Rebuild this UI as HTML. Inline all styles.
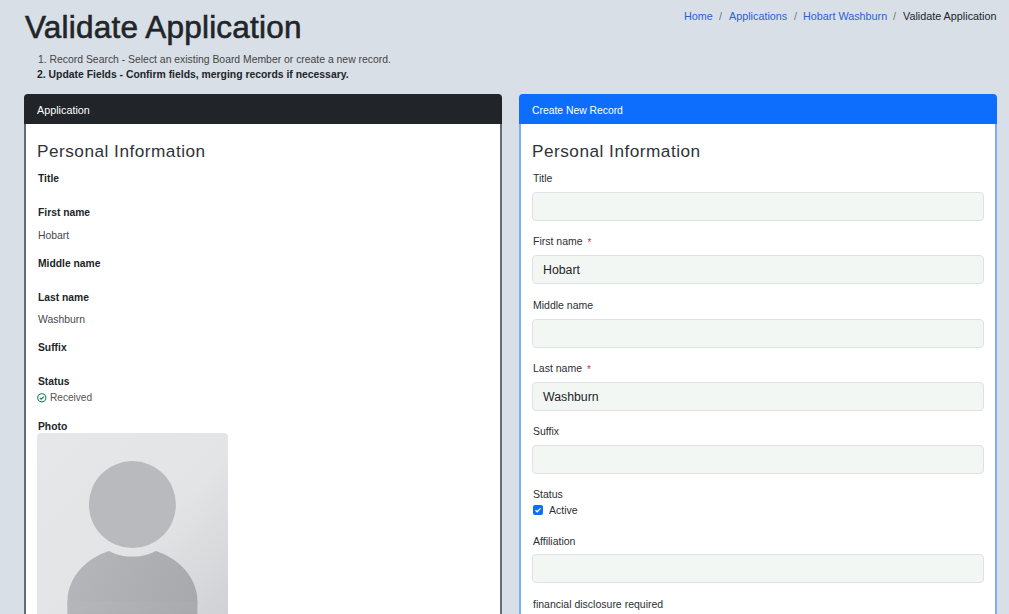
<!DOCTYPE html>
<html><head><meta charset="utf-8">
<style>
html,body{margin:0;padding:0}
body{width:1009px;height:614px;overflow:hidden;background:#d9dfe7;font-family:"Liberation Sans",sans-serif;color:#212529;position:relative}
.t{position:absolute;white-space:nowrap;line-height:1}
.b{font-weight:bold}
.card{position:absolute;top:94px;height:560px;background:#fff;border-radius:5px;box-sizing:border-box}
.hdr{position:absolute;left:0;top:0;right:0;height:30px;border-radius:4px 4px 0 0}
.inp{position:absolute;left:532px;width:452px;height:29px;box-sizing:border-box;background:#f3f7f4;border:1px solid #dee2e6;border-radius:4px}
.lab{font-size:10.5px;color:#2b2f33}
.lbl{font-size:10.3px;font-weight:bold}
</style></head><body>
<div class="t" style="left:25px;top:12px;font-size:31.5px;letter-spacing:0.2px;-webkit-text-stroke:0.6px #212529">Validate Application</div>

<div class="t" style="left:684px;top:11px;font-size:10.8px;color:#2a62d4">Home</div>
<div class="t" style="left:719px;top:11px;font-size:10.8px;color:#6c757d">/</div>
<div class="t" style="left:729px;top:11px;font-size:10.8px;color:#2a62d4">Applications</div>
<div class="t" style="left:794px;top:11px;font-size:10.8px;color:#6c757d">/</div>
<div class="t" style="left:803px;top:11px;font-size:10.8px;color:#2a62d4">Hobart Washburn</div>
<div class="t" style="left:893px;top:11px;font-size:10.8px;color:#6c757d">/</div>
<div class="t" style="left:903px;top:11px;font-size:10.8px;color:#212529">Validate Application</div>

<div class="t" style="left:38px;top:55px;font-size:10.4px;color:#444">1. Record Search - Select an existing Board Member or create a new record.</div>
<div class="t b" style="left:37px;top:70px;font-size:10.4px">2. Update Fields - Confirm fields, merging records if necessary.</div>

<div class="card" style="left:24px;width:478px;border:2px solid #676b72">
  <div class="hdr" style="background:#212529;left:-2px;right:-2px;top:-2px"></div>
</div>
<div class="card" style="left:519px;width:478px;border:2px solid #7aaefc">
  <div class="hdr" style="background:#0d6efd;left:-2px;right:-2px;top:-2px"></div>
</div>

<div class="t" style="left:37px;top:105px;font-size:10.8px;color:#fff">Application</div>
<div class="t" style="left:532px;top:106px;font-size:10.35px;color:#fff">Create New Record</div>

<div class="t" style="left:37px;top:143px;font-size:17.2px;letter-spacing:0.5px;color:#2f3337">Personal Information</div>
<div class="t" style="left:532px;top:143px;font-size:17.2px;letter-spacing:0.5px;color:#2f3337">Personal Information</div>

<!-- left card details -->
<div class="t lbl" style="left:38px;top:174px">Title</div>
<div class="t lbl" style="left:38px;top:208px">First name</div>
<div class="t" style="left:38px;top:231px;font-size:10.4px;color:#474a4d">Hobart</div>
<div class="t lbl" style="left:38px;top:259px">Middle name</div>
<div class="t lbl" style="left:38px;top:293px">Last name</div>
<div class="t" style="left:38px;top:315px;font-size:10.4px;color:#474a4d">Washburn</div>
<div class="t lbl" style="left:38px;top:343px">Suffix</div>
<div class="t lbl" style="left:38px;top:377px">Status</div>
<svg style="position:absolute;left:37px;top:393px" width="10" height="10" viewBox="0 0 10 10"><circle cx="4.8" cy="4.8" r="4.1" fill="none" stroke="#198754" stroke-width="1.1"/><path d="M2.9 4.9 L4.3 6.2 L6.8 3.6" fill="none" stroke="#198754" stroke-width="1.3"/></svg>
<div class="t" style="left:50px;top:393px;font-size:10.1px;color:#555">Received</div>
<div class="t lbl" style="left:38px;top:422px">Photo</div>

<svg style="position:absolute;left:37px;top:433px" width="191" height="190" viewBox="0 0 191 190">
  <defs>
    <linearGradient id="pg" x1="0" y1="0" x2="1" y2="1">
      <stop offset="0" stop-color="#e6e7e9"/><stop offset="0.55" stop-color="#e3e4e6"/><stop offset="1" stop-color="#cfd0d3"/>
    </linearGradient>
    <linearGradient id="bg2" x1="0" y1="0" x2="1" y2="0.4"><stop offset="0" stop-color="#b6b7ba"/><stop offset="1" stop-color="#a8a9ac"/></linearGradient>
    <mask id="gap"><rect width="191" height="190" fill="#fff"/><circle cx="95.4" cy="71.6" r="52" fill="#000"/></mask>
  </defs>
  <rect width="191" height="190" rx="4" fill="url(#pg)"/>
  <circle cx="95.4" cy="71.6" r="43.5" fill="#b9babd"/>
  <g mask="url(#gap)" fill="url(#bg2)">
    <ellipse cx="95.4" cy="168.5" rx="65" ry="54"/>
    <rect x="30.4" y="168.5" width="130" height="30"/>
  </g>
</svg>

<!-- right card form -->
<div class="t lab" style="left:533px;top:173px">Title</div>
<div class="inp" style="top:192px"></div>
<div class="t lab" style="left:533px;top:236px">First name <span style="color:#dc3545;margin-left:2px;font-size:10px;position:relative;top:1px">*</span></div>
<div class="inp" style="top:255px"></div>
<div class="t" style="left:543px;top:264px;font-size:12.3px">Hobart</div>
<div class="t lab" style="left:533px;top:300px">Middle name</div>
<div class="inp" style="top:319px"></div>
<div class="t lab" style="left:533px;top:363px">Last name <span style="color:#dc3545;margin-left:2px;font-size:10px;position:relative;top:1px">*</span></div>
<div class="inp" style="top:382px"></div>
<div class="t" style="left:543px;top:391px;font-size:12.3px">Washburn</div>
<div class="t lab" style="left:533px;top:426px">Suffix</div>
<div class="inp" style="top:445px"></div>
<div class="t lab" style="left:533px;top:489px">Status</div>
<svg style="position:absolute;left:533px;top:505px" width="10" height="10" viewBox="0 0 10 10"><rect width="10" height="10" rx="2" fill="#0d6efd"/><path d="M2.5 5.2 L4.2 6.8 L7.5 3.4" fill="none" stroke="#fff" stroke-width="1.3"/></svg>
<div class="t lab" style="left:549px;top:505px">Active</div>
<div class="t lab" style="left:533px;top:536px">Affiliation</div>
<div class="inp" style="top:554px"></div>
<div class="t lab" style="left:533px;top:599px">financial disclosure required</div>
</body></html>
